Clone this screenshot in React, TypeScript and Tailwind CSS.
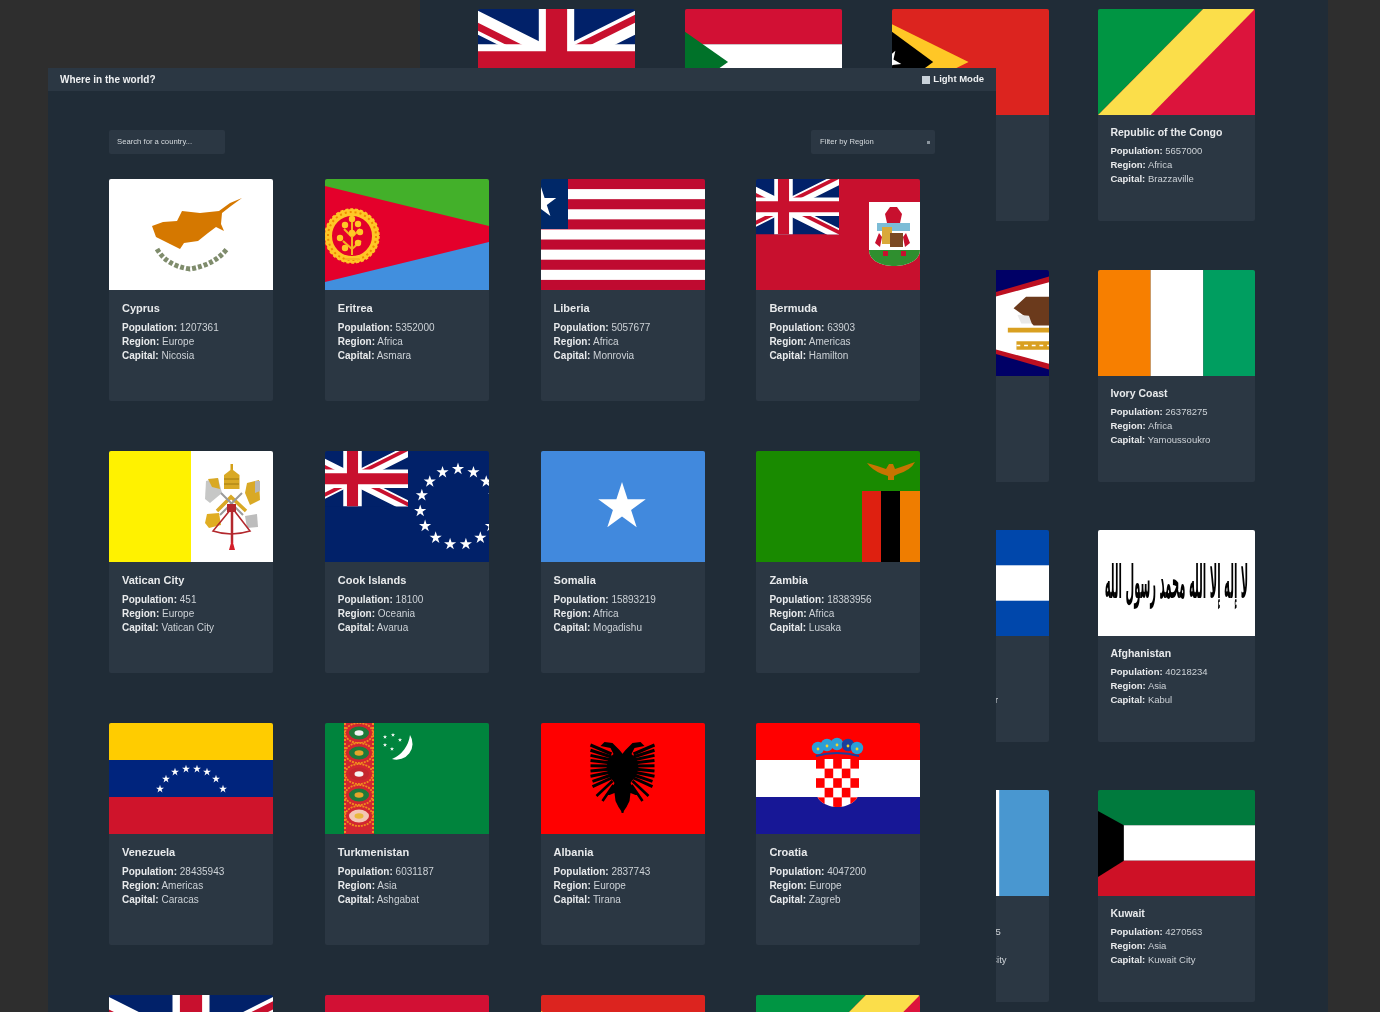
import React from "react";

const star = (cx: number, cy: number, r: number, rot = -90) => {
  const pts: string[] = [];
  for (let i = 0; i < 10; i++) {
    const rad = i % 2 === 0 ? r : r * 0.382;
    const a = ((rot + i * 36) * Math.PI) / 180;
    pts.push(`${(cx + rad * Math.cos(a)).toFixed(2)},${(cy + rad * Math.sin(a)).toFixed(2)}`);
  }
  return pts.join(" ");
};

function Union({ x = 0, y = 0, w = 164, h = 111 }: { x?: number; y?: number; w?: number; h?: number }) {
  return (
    <svg x={x} y={y} width={w} height={h} viewBox="0 0 60 30" preserveAspectRatio="xMidYMid slice">
      <rect width="60" height="30" fill="#012169" />
      <path d="M0 0L60 30M60 0L0 30" stroke="#fff" strokeWidth="6" />
      <path d="M0 0L30 15H25.53L0 2.24ZM60 30L30 15H34.47L60 27.76ZM30 15L60 0H55.53L30 12.76ZM30 15L0 30H4.47L30 17.24Z" fill="#c8102e" />
      <path d="M30 0V30M0 15H60" stroke="#fff" strokeWidth="10" />
      <path d="M30 0V30M0 15H60" stroke="#c8102e" strokeWidth="6" />
    </svg>
  );
}

function FlagArt({ name }: { name: string }) {
  switch (name) {
    case "Cyprus":
      return (
        <>
          <rect width="164" height="111" fill="#fff" />
          <path d="M133 19L121 24L110 32L91 34L73 32L68 42L54 43L43 47L47 58L59 64L71 70L75 64L89 62L99 54L107 48L115 52L112 45L113 34L122 27Z" fill="#d57800" />
          <path d="M48 70Q58 87 81 90Q105 86 118 70" fill="none" stroke="#7f8c6c" strokeWidth="5" strokeDasharray="4 2" />
        </>
      );
    case "Eritrea":
      return (
        <>
          <rect width="164" height="56" fill="#43b02a" />
          <rect y="56" width="164" height="55" fill="#418fde" />
          <polygon points="0,7 164,47 164,63 0,103" fill="#e4002b" />
          <circle cx="27" cy="57" r="23.5" fill="none" stroke="#ffc726" strokeWidth="7" />
          <circle cx="27" cy="57" r="24" fill="none" stroke="#ee8a00" strokeWidth="2" strokeDasharray="2 3" />
          <circle cx="27" cy="57" r="27" fill="none" stroke="#ffc726" strokeWidth="1.5" strokeDasharray="3 2" />
          <path d="M27 42V76M20 80H34M27 70L18 62M27 70L36 62M27 58L19 50M27 58L35 50" stroke="#f5b321" strokeWidth="2" />
          {[[20, 46], [33, 45], [15, 59], [35, 53], [33, 64], [20, 69], [27, 54], [27, 40]].map(([x, y]) => (
            <circle key={`${x}-${y}`} cx={x} cy={y} r="3.2" fill="#ffc726" />
          ))}
        </>
      );
    case "Liberia":
      return (
        <>
          <rect width="164" height="111" fill="#fff" />
          {[0, 2, 4, 6, 8, 10].map((i) => (
            <rect key={i} y={i * 10.09} width="164" height="10.09" fill="#bf0a30" />
          ))}
          <rect width="27" height="50" fill="#002868" />
          <polygon points={star(0, 24, 16)} fill="#fff" />
        </>
      );
    case "Bermuda":
      return (
        <>
          <rect width="164" height="111" fill="#c8102e" />
          <Union x={-28} y={0} w={111} h={55.5} />
          <path d="M113 23H164V71C164 82 150 87 138 87C126 87 113 82 113 71Z" fill="#fff" />
          <path d="M113 71H164C164 82 150 87 138 87C126 87 113 82 113 71Z" fill="#2f8f2f" />
          <path d="M131 44L129 35L134 28H141L146 35L144 44Z" fill="#c8102e" />
          <rect x="121" y="44" width="33" height="8" fill="#7cbcd6" />
          <rect x="126" y="48" width="10" height="17" fill="#d9a93a" />
          <rect x="134" y="54" width="13" height="14" fill="#7b4a24" />
          <path d="M119 64L123 54L126 58L124 68Z M154 64L150 54L147 58L149 68Z" fill="#c8102e" />
          <rect x="127" y="72" width="5" height="5" fill="#c8102e" />
          <rect x="145" y="72" width="5" height="5" fill="#c8102e" />
        </>
      );
    case "Vatican City":
      return (
        <>
          <rect width="82" height="111" fill="#fff200" />
          <rect x="82" width="82" height="111" fill="#fff" />
          <rect x="121.5" y="13" width="2.5" height="6" fill="#d4a017" />
          <path d="M115 38V24L122.7 18L130.5 24V38Z" fill="#d9a925" />
          <path d="M115 28H130M115 33H130" stroke="#a07a10" strokeWidth="1" />
          <path d="M97 30L109 27L113 42L101 52L96 48Z" fill="#c6c7c6" />
          <path d="M99 28L109 27L111 38L103 36Z" fill="#d9a925" />
          <path d="M138 32L150 29L151 49L141 54L136 42Z" fill="#d9a925" />
          <path d="M146 30L151 30L151 40L146 42Z" fill="#b8b8b8" />
          <path d="M98 63L110 62L112 74L100 77L96 72Z" fill="#e0ad22" />
          <path d="M136 65L148 63L149 76L138 77Z" fill="#bdbdbd" />
          <path d="M108 60L122 46L137 60" fill="none" stroke="#d9a925" strokeWidth="3.5" />
          <path d="M112 42L134 64M133 42L111 64" stroke="#9a9a9a" strokeWidth="2" />
          <rect x="118" y="53" width="9" height="8" fill="#b3282d" />
          <path d="M122 58L104 80Q122 86 141 80L124 58" fill="none" stroke="#b3282d" strokeWidth="1.6" />
          <path d="M123 58V92" stroke="#b3282d" strokeWidth="2.5" />
          <path d="M123 88L120 99H126Z" fill="#d3202a" />
        </>
      );
    case "Cook Islands":
      return (
        <>
          <rect width="164" height="111" fill="#012169" />
          <Union x={-28} y={0} w={111} h={55.5} />
          {Array.from({ length: 15 }).map((_, i) => {
            const a = (i * 24 * Math.PI) / 180 - Math.PI / 2;
            return <polygon key={i} points={star(133 + 38 * Math.cos(a), 56 + 38 * Math.sin(a), 6.4)} fill="#fff" />;
          })}
        </>
      );
    case "Somalia":
      return (
        <>
          <rect width="164" height="111" fill="#4189dd" />
          <polygon points={star(81, 56, 25)} fill="#fff" />
        </>
      );
    case "Zambia":
      return (
        <>
          <rect width="164" height="111" fill="#198a00" />
          <rect x="106" y="40" width="19" height="71" fill="#de2010" />
          <rect x="125" y="40" width="19" height="71" fill="#000" />
          <rect x="144" y="40" width="20" height="71" fill="#ef7d00" />
          <path d="M111 12Q122 15 130 18L133 13L137 13L139 18Q148 15 159 11Q155 19 142 23L138 25L138 29L132 29L132 25L126 23Q116 19 111 12Z" fill="#c77400" />
        </>
      );
    case "Venezuela":
      return (
        <>
          <rect width="164" height="37" fill="#ffcc00" />
          <rect y="37" width="164" height="37" fill="#00247d" />
          <rect y="74" width="164" height="37" fill="#cf142b" />
          {[[51, 66], [57, 56], [66, 49], [77, 46], [88, 46], [98, 49], [107, 56], [114, 66]].map(([x, y]) => (
            <polygon key={x} points={star(x, y, 4.2)} fill="#fff" />
          ))}
        </>
      );
    case "Turkmenistan":
      return (
        <>
          <rect width="164" height="111" fill="#00843d" />
          <rect x="19" width="30" height="111" fill="#d22630" />
          <path d="M20 0V111M48 0V111" stroke="#f08c1e" strokeWidth="2" strokeDasharray="2 2" />
          {[
            [10, "#1f7a3a", "#f2f2f2"],
            [30, "#1f7a3a", "#e6a52a"],
            [51, "#c4262e", "#f5f5f5"],
            [72, "#1f7a3a", "#e6a52a"],
            [93, "#f3c6b5", "#e9b83c"],
          ].map(([y, a, b]) => (
            <g key={y as number}>
              <ellipse cx="34" cy={y as number} rx="14" ry="10" fill="#d22630" stroke="#f08c1e" strokeWidth="1.8" strokeDasharray="2 1" />
              <ellipse cx="34" cy={y as number} rx="10" ry="6.5" fill={a as string} />
              <ellipse cx="34" cy={y as number} rx="4.5" ry="2.8" fill={b as string} />
            </g>
          ))}
          <path d="M85 12A16 16 0 0 1 67 36A30 30 0 0 0 85 12Z" fill="#fff" />
          {[[60, 22], [68, 12], [75, 17], [67, 26], [60, 14]].map(([x, y]) => (
            <polygon key={`${x}-${y}`} points={star(x, y, 2.2)} fill="#fff" />
          ))}
        </>
      );
    case "Albania":
      return (
        <>
          <rect width="164" height="111" fill="#ff0000" />
          {[1, -1].map((s) => (
            <g key={s} transform={`translate(81.5 0) scale(${s} 1)`}>
              <path d="M-1 32L3 27L10 20L18 19L22 23L17 24L12 25L9 31L14 36L16 44L14 52L8 60L11 66L17 72L13 72L8 70L7 78L4 84L0 90L-1 90Z" fill="#000" />
              {Array.from({ length: 9 }).map((_, i) => (
                <path key={i} d={`M11 ${31 + i * 3}L${32 - (i > 6 ? 2 : 0)} ${22 + i * 5.2}`} stroke="#000" strokeWidth="3" />
              ))}
              <path d="M10 58L26 73M9 62L20 78" stroke="#000" strokeWidth="2.6" />
            </g>
          ))}
        </>
      );
    case "Croatia":
      return (
        <>
          <rect width="164" height="37" fill="#ff0000" />
          <rect y="37" width="164" height="37" fill="#fff" />
          <rect y="74" width="164" height="37" fill="#171796" />
          <clipPath id="hr-shield">
            <path d="M60 36H103V68C103 78 92 84 81.5 84C71 84 60 78 60 68Z" />
          </clipPath>
          <g clipPath="url(#hr-shield)">
            <rect x="60" y="36" width="43" height="48" fill="#fff" />
            {Array.from({ length: 25 }).map((_, i) => {
              const c = i % 5;
              const r = Math.floor(i / 5);
              return (c + r) % 2 === 0 ? (
                <rect key={i} x={60 + c * 8.6} y={36 + r * 9.6} width="8.6" height="9.6" fill="#ff0000" />
              ) : null;
            })}
          </g>
          {[[62, 25], [71, 22], [81, 21], [92, 22], [101, 25]].map(([x, y], i) => (
            <g key={x}>
              <circle cx={x} cy={y} r="6.2" fill={i === 3 ? "#1b3f9c" : "#2a9fd6"} />
              <circle cx={x} cy={y + 1} r="1.4" fill="#f5d327" />
            </g>
          ))}
          <path d="M60 33Q81 27 103 33" fill="none" stroke="#1b3f9c" strokeWidth="2" />
        </>
      );
    case "United Kingdom":
      return <Union />;
    case "Sudan":
      return (
        <>
          <rect width="164" height="37" fill="#d21034" />
          <rect y="37" width="164" height="37" fill="#fff" />
          <rect y="74" width="164" height="37" fill="#000" />
          <polygon points="0,24 45,55.5 0,87" fill="#007229" />
        </>
      );
    case "Timor-Leste":
      return (
        <>
          <rect width="164" height="111" fill="#dc241f" />
          <polygon points="0,16 80,55.5 0,95" fill="#ffc726" />
          <polygon points="0,24 43,55.5 0,87" fill="#000" />
          <polygon points={star(-3, 55, 13, -60)} fill="#fff" />
        </>
      );
    case "Republic of the Congo":
      return (
        <>
          <rect width="164" height="111" fill="#dc143c" />
          <polygon points="0,0 110,0 0,111" fill="#009543" />
          <polygon points="110,0 164,0 55,111 0,111" fill="#fbde4a" />
        </>
      );
    case "American Samoa":
      return (
        <>
          <rect width="164" height="111" fill="#000066" />
          <polygon points="-3,55.5 164,7 164,104" fill="#bd1021" />
          <polygon points="6,55.5 164,13 164,98" fill="#fff" />
          <path d="M127 40L140 28H164V58H148L138 48Z" fill="#6b3a1c" />
          <path d="M131 47L143 48L146 56L135 56Z" fill="#e8e8e8" />
          <path d="M121 63H164" stroke="#d9a021" strokeWidth="5" />
          <path d="M130 79H164" stroke="#d9a021" strokeWidth="9" />
          <path d="M130 79H164" stroke="#fff" strokeWidth="1.5" strokeDasharray="4 4" />
        </>
      );
    case "Ivory Coast":
      return (
        <>
          <rect width="55" height="111" fill="#f77f00" />
          <rect x="55" width="55" height="111" fill="#fff" />
          <rect x="110" width="54" height="111" fill="#009e60" />
        </>
      );
    case "El Salvador":
      return (
        <>
          <rect width="164" height="111" fill="#0047ab" />
          <rect y="37" width="164" height="37" fill="#fff" />
        </>
      );
    case "Afghanistan":
      return (
        <>
          <rect width="164" height="111" fill="#fff" />
          <text x="82" y="0" textAnchor="middle" fontFamily="'DejaVu Sans', sans-serif" fontWeight="700" fontSize="20" textLength="150" lengthAdjust="spacingAndGlyphs" fill="#000" transform="translate(0 71) scale(1 2.4)">
            لا إله إلا الله محمد رسول الله
          </text>
        </>
      );
    case "Guatemala":
      return (
        <>
          <rect width="164" height="111" fill="#4997d0" />
          <rect x="55" width="57" height="111" fill="#fff" />
        </>
      );
    case "Kuwait":
      return (
        <>
          <rect width="164" height="37" fill="#007a3d" />
          <rect y="37" width="164" height="37" fill="#fff" />
          <rect y="74" width="164" height="37" fill="#ce1126" />
          <polygon points="0,22 27,37 27,74 0,91" fill="#000" />
        </>
      );
    default:
      return <rect width="164" height="111" fill="#2b3743" />;
  }
}

type Country = { n: string; p: string; r: string; c: string };

const front: Country[] = [
  { n: "Cyprus", p: "1207361", r: "Europe", c: "Nicosia" },
  { n: "Eritrea", p: "5352000", r: "Africa", c: "Asmara" },
  { n: "Liberia", p: "5057677", r: "Africa", c: "Monrovia" },
  { n: "Bermuda", p: "63903", r: "Americas", c: "Hamilton" },
  { n: "Vatican City", p: "451", r: "Europe", c: "Vatican City" },
  { n: "Cook Islands", p: "18100", r: "Oceania", c: "Avarua" },
  { n: "Somalia", p: "15893219", r: "Africa", c: "Mogadishu" },
  { n: "Zambia", p: "18383956", r: "Africa", c: "Lusaka" },
  { n: "Venezuela", p: "28435943", r: "Americas", c: "Caracas" },
  { n: "Turkmenistan", p: "6031187", r: "Asia", c: "Ashgabat" },
  { n: "Albania", p: "2837743", r: "Europe", c: "Tirana" },
  { n: "Croatia", p: "4047200", r: "Europe", c: "Zagreb" },
  { n: "United Kingdom", p: "67215293", r: "Europe", c: "London" },
  { n: "Sudan", p: "43849269", r: "Africa", c: "Khartoum" },
  { n: "Timor-Leste", p: "1318442", r: "Asia", c: "Dili" },
  { n: "Republic of the Congo", p: "5657000", r: "Africa", c: "Brazzaville" },
];

const back: Country[] = [
  { n: "United Kingdom", p: "67215293", r: "Europe", c: "London" },
  { n: "Sudan", p: "43849269", r: "Africa", c: "Khartoum" },
  { n: "Timor-Leste", p: "1318442", r: "Asia", c: "Dili" },
  { n: "Republic of the Congo", p: "5657000", r: "Africa", c: "Brazzaville" },
  { n: "Austria", p: "8917205", r: "Europe", c: "Vienna" },
  { n: "Guyana", p: "786559", r: "Americas", c: "Georgetown" },
  { n: "American Samoa", p: "55197", r: "Oceania", c: "Pago Pago" },
  { n: "Ivory Coast", p: "26378275", r: "Africa", c: "Yamoussoukro" },
  { n: "Nauru", p: "10834", r: "Oceania", c: "Yaren" },
  { n: "Kenya", p: "53771300", r: "Africa", c: "Nairobi" },
  { n: "El Salvador", p: "6486201", r: "Americas", c: "San Salvador" },
  { n: "Afghanistan", p: "40218234", r: "Asia", c: "Kabul" },
  { n: "Qatar", p: "2881060", r: "Asia", c: "Doha" },
  { n: "Norway", p: "5379475", r: "Europe", c: "Oslo" },
  { n: "Guatemala", p: "16858335", r: "Americas", c: "Guatemala City" },
  { n: "Kuwait", p: "4270563", r: "Asia", c: "Kuwait City" },
];

function FrontCard({ c }: { c: Country }) {
  return (
    <div className="w-[164px] h-[222px] bg-[#2b3743] rounded-[2px] overflow-hidden text-[#e8eaec]">
      <svg viewBox="0 0 164 111" preserveAspectRatio="xMidYMid slice" className="block w-[164px] h-[111px] blur-[0.5px]">
        <FlagArt name={c.n} />
      </svg>
      <div className="pt-[11px] px-[13px] blur-[0.7px]">
        <p className="text-[11px] font-bold leading-[14px] mb-[6px] whitespace-nowrap">{c.n}</p>
        <p className="text-[10px] leading-[14px] whitespace-nowrap text-[#cdd2d7]"><span className="font-bold text-[#e8eaec]">Population:</span> {c.p}</p>
        <p className="text-[10px] leading-[14px] whitespace-nowrap text-[#cdd2d7]"><span className="font-bold text-[#e8eaec]">Region:</span> {c.r}</p>
        <p className="text-[10px] leading-[14px] whitespace-nowrap text-[#cdd2d7]"><span className="font-bold text-[#e8eaec]">Capital:</span> {c.c}</p>
      </div>
    </div>
  );
}

function BackCard({ c }: { c: Country }) {
  return (
    <div className="w-[157px] h-[212px] bg-[#2b3743] rounded-[2px] overflow-hidden text-[#e8eaec]">
      <svg viewBox="0 0 164 111" preserveAspectRatio="xMidYMid slice" className="block w-[157px] h-[106px] blur-[0.5px]">
        <FlagArt name={c.n} />
      </svg>
      <div className="pt-[10px] px-[12px] blur-[0.7px]">
        <p className="text-[10.5px] font-bold leading-[14px] mb-[5px] whitespace-nowrap">{c.n}</p>
        <p className="text-[9.5px] leading-[14px] whitespace-nowrap text-[#cdd2d7]"><span className="font-bold text-[#e8eaec]">Population:</span> {c.p}</p>
        <p className="text-[9.5px] leading-[14px] whitespace-nowrap text-[#cdd2d7]"><span className="font-bold text-[#e8eaec]">Region:</span> {c.r}</p>
        <p className="text-[9.5px] leading-[14px] whitespace-nowrap text-[#cdd2d7]"><span className="font-bold text-[#e8eaec]">Capital:</span> {c.c}</p>
      </div>
    </div>
  );
}

export default function App() {
  return (
    <div className="relative w-[1380px] h-[1012px] overflow-hidden bg-[#2e2e2e] font-['Liberation_Sans',Arial,sans-serif]">
      {/* rear window */}
      <div className="absolute left-[420px] top-0 w-[908px] h-[1012px] overflow-hidden bg-[#202c37] pl-[58px] pt-[9.4px]">
        <div className="grid grid-cols-[157px_157px_157px_157px] gap-x-[49.8px] gap-y-[48.3px]">
          {back.map((c) => (
            <BackCard key={c.n} c={c} />
          ))}
        </div>
      </div>

      {/* front window */}
      <div className="absolute left-[48px] top-[68px] w-[948px] h-[944px] overflow-hidden bg-[#202c37]">
        <header className="h-[23px] bg-[#2b3743] flex items-center justify-between pl-[12px] pr-[12px] text-[#eef0f2]">
          <span className="text-[10px] font-bold blur-[0.6px]">Where in the world?</span>
          <span className="flex items-center gap-[3px] text-[9.5px] font-bold blur-[0.6px]">
            <span className="w-[8px] h-[8px] bg-[#c9d2da]" />
            Light Mode
          </span>
        </header>
        <main className="px-[61px] pt-[39px]">
          <div className="flex items-center justify-between h-[24px] mb-[25px] text-[7.7px] text-[#d5dade]">
            <div className="w-[116px] h-[24px] bg-[#2b3743] rounded-[2px] flex items-center pl-[8px]">
              <span className="blur-[0.6px]">Search for a country...</span>
            </div>
            <div className="w-[124px] h-[24px] bg-[#2b3743] rounded-[2px] flex items-center justify-between pl-[9px] pr-[5px]">
              <span className="blur-[0.6px]">Filter by Region</span>
              <span className="w-[3px] h-[3px] bg-[#8a949d] blur-[0.5px]" />
            </div>
          </div>
          <div className="grid grid-cols-[164px_164px_164px_164px] gap-x-[51.8px] gap-y-[50px]">
            {front.map((c) => (
              <FrontCard key={c.n} c={c} />
            ))}
          </div>
        </main>
      </div>
    </div>
  );
}
